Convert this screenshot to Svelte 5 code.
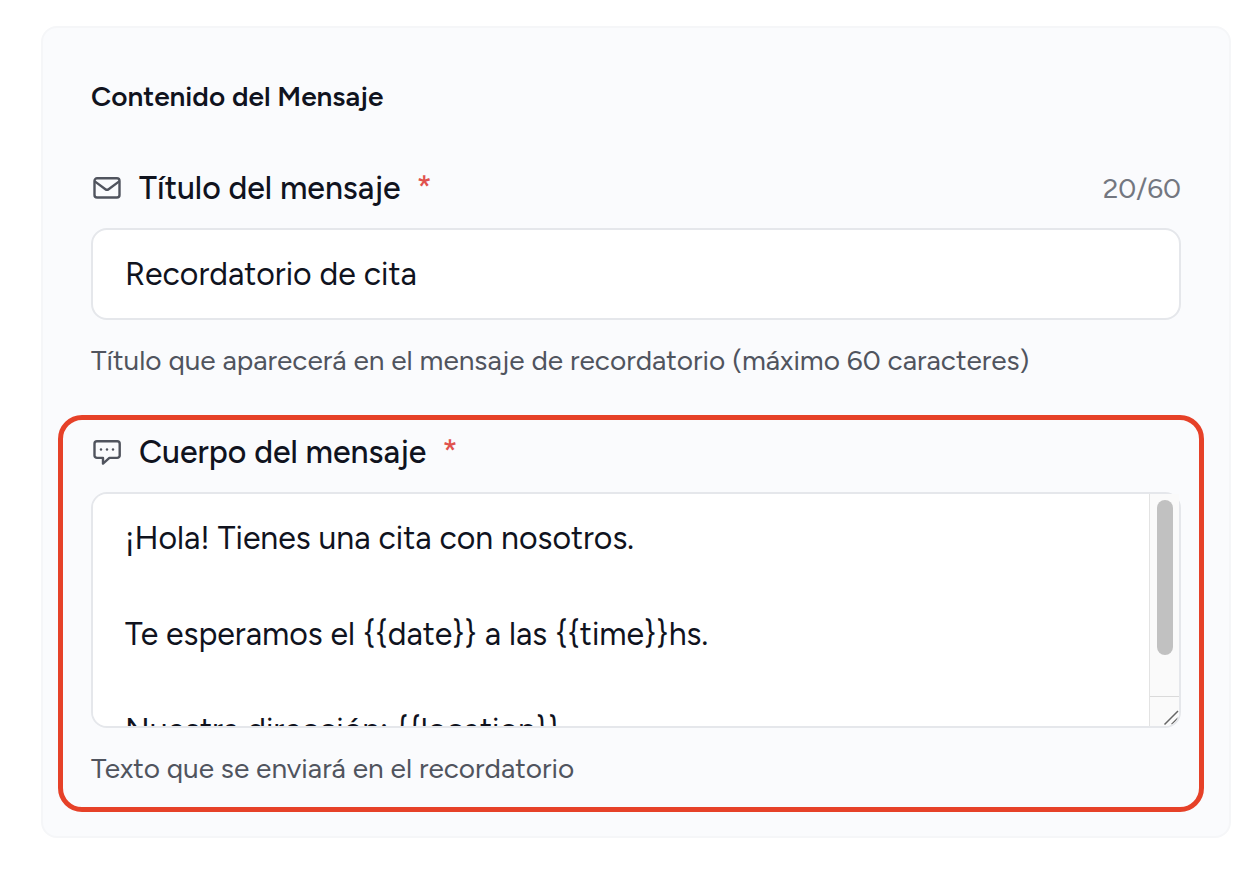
<script lang="ts">
  const maxTitle = 60;
  let title = $state('Recordatorio de cita');
  let body = $state(
    '¡Hola! Tienes una cita con nosotros.\n\n' +
    'Te esperamos el {{date}} a las {{time}}hs.\n\n' +
    'Nuestra dirección: {{location}}'
  );

  let scrolled = $state(0);

  function onScroll(e: Event) {
    const el = e.currentTarget as HTMLTextAreaElement;
    const range = el.scrollHeight - el.clientHeight;
    scrolled = range > 0 ? el.scrollTop / range : 0;
  }
</script>

<main>
  <section class="card">
    <h2>Contenido del Mensaje</h2>

    <div class="field">
      <div class="head">
        <label for="title">
          <svg class="icon" viewBox="0 0 32 32" aria-hidden="true">
            <rect x="3.5" y="6.3" width="25" height="19.2" rx="2.6" />
            <path d="M3.8 9.4 14.4 17.2a2.6 2.6 0 0 0 3.2 0L28.2 9.4" />
          </svg>
          <span>Título del mensaje</span>
          <span class="required">*</span>
        </label>
        <span class="count">{title.length}/{maxTitle}</span>
      </div>
      <input id="title" type="text" maxlength={maxTitle} bind:value={title}>
      <p class="hint">Título que aparecerá en el mensaje de recordatorio (máximo 60 caracteres)</p>
    </div>

    <div class="field highlight">
      <div class="head">
        <label for="body">
          <svg class="icon" viewBox="0 0 32 32" aria-hidden="true">
            <path d="M6 5.2H26.2a2.5 2.5 0 0 1 2.5 2.5V19.4a2.5 2.5 0 0 1-2.5 2.5H18.4L12 27.6V21.9H6a2.5 2.5 0 0 1-2.5-2.5V7.7A2.5 2.5 0 0 1 6 5.2Z" />
            <g class="dots">
              <circle cx="10" cy="13.5" r="1.2" />
              <circle cx="16" cy="13.5" r="1.2" />
              <circle cx="22" cy="13.5" r="1.2" />
            </g>
          </svg>
          <span>Cuerpo del mensaje</span>
          <span class="required">*</span>
        </label>
      </div>
      <div class="editor">
        <textarea id="body" bind:value={body} onscroll={onScroll}></textarea>
        <div class="scrollbar" aria-hidden="true">
          <div class="track">
            <div class="thumb" style:margin-top="{scrolled * 36}px"></div>
          </div>
          <svg class="grip" viewBox="0 0 29 29">
            <path d="M14.5 27.5 28 14M21.5 27.5 28 21" />
          </svg>
        </div>
      </div>
      <p class="hint">Texto que se enviará en el recordatorio</p>
    </div>
  </section>
</main>

<style>
  :global(body) {
    margin: 0;
    background: #fff;
  }

  main {
    padding: 26px 29px 38px 41px;
    font-family: Figtree, Lato, sans-serif;
    color: #10131e;
  }

  .card {
    padding: 48px 48px 24px;
    border: 2px solid #f5f6f8;
    border-radius: 16px;
    background: #fafbfd;
  }

  h2 {
    margin: 0 0 48px;
    font-size: 28px;
    line-height: 40px;
    font-weight: 600;
  }

  .field {
    display: flex;
    flex-direction: column;
  }

  .highlight {
    margin: 35px -23px 0 -33px;
    padding: 8px 18px 19px 28px;
    border: 5px solid #e64128;
    border-radius: 24px;
  }

  .head {
    display: flex;
    align-items: center;
    justify-content: space-between;
    margin-bottom: 16px;
  }

  label {
    display: flex;
    align-items: center;
    gap: 16px;
    font-size: 32px;
    line-height: 48px;
    font-weight: 500;
  }

  .icon {
    width: 32px;
    height: 32px;
    fill: none;
    stroke: #50545e;
    stroke-width: 2.4;
    stroke-linejoin: round;
  }

  .dots {
    fill: #50545e;
    stroke: none;
  }

  .required {
    color: #e0524d;
  }

  .count {
    font-size: 28px;
    line-height: 40px;
    color: #737780;
  }

  input,
  textarea {
    box-sizing: border-box;
    width: 100%;
    margin: 0;
    padding: 20px 32px;
    border: 2px solid #e5e7eb;
    border-radius: 16px;
    outline: none;
    background: #fff;
    color: inherit;
    font-family: inherit;
    font-size: 32px;
    line-height: 48px;
  }

  input {
    height: 92px;
  }

  .editor {
    position: relative;
  }

  textarea {
    display: block;
    height: 236px;
    padding-right: 62px;
    resize: none;
    scrollbar-width: none;
  }

  /* lies over the right edge of the textarea */
  .scrollbar {
    position: absolute;
    top: 2px;
    right: 2px;
    bottom: 2px;
    display: flex;
    flex-direction: column;
    width: 30px;
    box-sizing: border-box;
    border-left: 1px solid #e3e3e3;
    border-radius: 0 0 14px 0;
    background: #fafafa;
    overflow: hidden;
    pointer-events: none;
  }

  .track {
    flex: 1;
    padding: 6px 6px 6px 7px;
  }

  .thumb {
    height: 155px;
    border-radius: 8px;
    background: #c1c1c1;
  }

  .grip {
    height: 29px;
    border-top: 1px solid #dadada;
    fill: none;
    stroke: #666;
    stroke-width: 1.5;
  }

  .hint {
    margin: 20px 0 0;
    font-size: 28px;
    line-height: 40px;
    color: #50545e;
  }
</style>
